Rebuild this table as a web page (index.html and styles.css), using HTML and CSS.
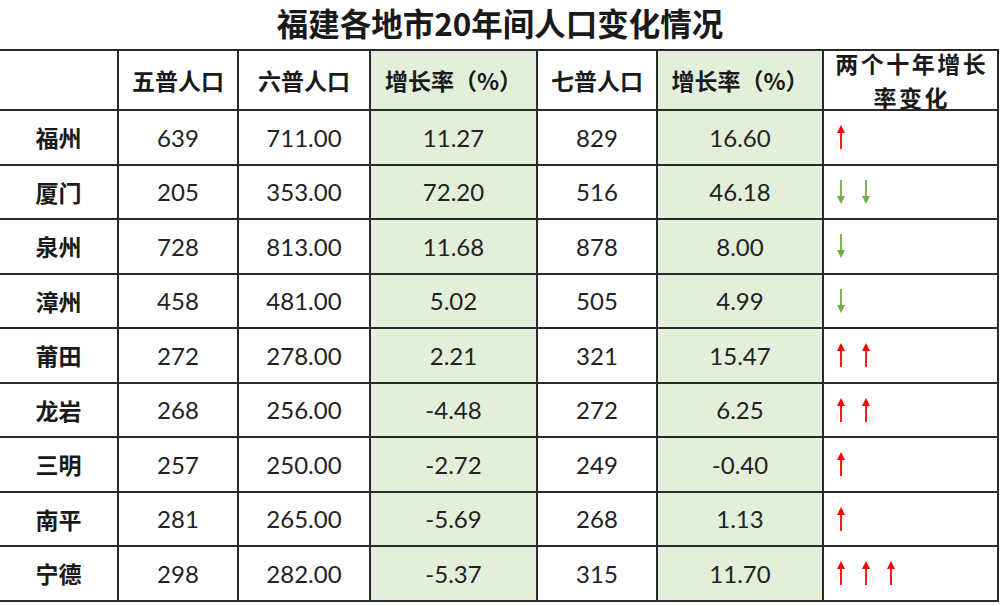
FILE: index.html
```html
<!DOCTYPE html>
<html lang="zh-CN">
<head>
<meta charset="utf-8">
<title>福建各地市20年间人口变化情况</title>
<link rel="stylesheet" href="styles.css">
</head>
<body>
<div class="page">
  <h1 class="title">福建各地市20年间人口变化情况</h1>
  <table class="sheet">
    <colgroup>
      <col class="c-name"><col class="c-5"><col class="c-6"><col class="c-r1"><col class="c-7"><col class="c-r2"><col class="c-chg">
    </colgroup>
    <thead>
      <tr class="head">
        <th class="first"></th>
        <th>五普人口</th>
        <th>六普人口</th>
        <th class="green">增长率（%）</th>
        <th>七普人口</th>
        <th class="green">增长率（%）</th>
        <th class="wrap"><div class="wrapbox"><span>两个十年增长</span><span>率变化</span></div></th>
      </tr>
    </thead>
    <tbody>
      <tr><th class="first">福州</th><td>639</td><td>711.00</td><td class="green">11.27</td><td>829</td><td class="green">16.60</td><td class="arrows"><svg class="arw up" viewBox="0 0 10 24"><polygon points="5,0 9,8 1,8"/><rect x="4.1" y="7" width="1.8" height="17"/></svg></td></tr>
      <tr><th class="first">厦门</th><td>205</td><td>353.00</td><td class="green">72.20</td><td>516</td><td class="green">46.18</td><td class="arrows"><svg class="arw down" viewBox="0 0 10 24"><rect x="4.1" y="0" width="1.8" height="17"/><polygon points="5,24 9,16 1,16"/></svg><svg class="arw down" viewBox="0 0 10 24"><rect x="4.1" y="0" width="1.8" height="17"/><polygon points="5,24 9,16 1,16"/></svg></td></tr>
      <tr><th class="first">泉州</th><td>728</td><td>813.00</td><td class="green">11.68</td><td>878</td><td class="green">8.00</td><td class="arrows"><svg class="arw down" viewBox="0 0 10 24"><rect x="4.1" y="0" width="1.8" height="17"/><polygon points="5,24 9,16 1,16"/></svg></td></tr>
      <tr><th class="first">漳州</th><td>458</td><td>481.00</td><td class="green">5.02</td><td>505</td><td class="green">4.99</td><td class="arrows"><svg class="arw down" viewBox="0 0 10 24"><rect x="4.1" y="0" width="1.8" height="17"/><polygon points="5,24 9,16 1,16"/></svg></td></tr>
      <tr><th class="first">莆田</th><td>272</td><td>278.00</td><td class="green">2.21</td><td>321</td><td class="green">15.47</td><td class="arrows"><svg class="arw up" viewBox="0 0 10 24"><polygon points="5,0 9,8 1,8"/><rect x="4.1" y="7" width="1.8" height="17"/></svg><svg class="arw up" viewBox="0 0 10 24"><polygon points="5,0 9,8 1,8"/><rect x="4.1" y="7" width="1.8" height="17"/></svg></td></tr>
      <tr><th class="first">龙岩</th><td>268</td><td>256.00</td><td class="green">-4.48</td><td>272</td><td class="green">6.25</td><td class="arrows"><svg class="arw up" viewBox="0 0 10 24"><polygon points="5,0 9,8 1,8"/><rect x="4.1" y="7" width="1.8" height="17"/></svg><svg class="arw up" viewBox="0 0 10 24"><polygon points="5,0 9,8 1,8"/><rect x="4.1" y="7" width="1.8" height="17"/></svg></td></tr>
      <tr><th class="first">三明</th><td>257</td><td>250.00</td><td class="green">-2.72</td><td>249</td><td class="green">-0.40</td><td class="arrows"><svg class="arw up" viewBox="0 0 10 24"><polygon points="5,0 9,8 1,8"/><rect x="4.1" y="7" width="1.8" height="17"/></svg></td></tr>
      <tr><th class="first">南平</th><td>281</td><td>265.00</td><td class="green">-5.69</td><td>268</td><td class="green">1.13</td><td class="arrows"><svg class="arw up" viewBox="0 0 10 24"><polygon points="5,0 9,8 1,8"/><rect x="4.1" y="7" width="1.8" height="17"/></svg></td></tr>
      <tr><th class="first">宁德</th><td>298</td><td>282.00</td><td class="green">-5.37</td><td>315</td><td class="green">11.70</td><td class="arrows"><svg class="arw up" viewBox="0 0 10 24"><polygon points="5,0 9,8 1,8"/><rect x="4.1" y="7" width="1.8" height="17"/></svg><svg class="arw up" viewBox="0 0 10 24"><polygon points="5,0 9,8 1,8"/><rect x="4.1" y="7" width="1.8" height="17"/></svg><svg class="arw up" viewBox="0 0 10 24"><polygon points="5,0 9,8 1,8"/><rect x="4.1" y="7" width="1.8" height="17"/></svg></td></tr>
    </tbody>
  </table>
</div>
</body>
</html>
```
FILE: styles.css
```css
html, body {
  margin: 0;
  padding: 0;
  background: #ffffff;
}
.page {
  width: 1000px;
  height: 606px;
  overflow: hidden;
  font-family: Lato, "Noto Sans CJK SC", sans-serif;
  color: #1c1c1c;
}
.title {
  margin: 0;
  height: 49px;
  line-height: 44px;
  text-align: center;
  font-family: "Noto Sans CJK SC", sans-serif;
  font-weight: 700;
  font-size: 31.5px;
  color: #1a1a1a;
}
.sheet {
  border-collapse: collapse;
  table-layout: fixed;
  width: 998px;
}
.c-name { width: 118px; }
.c-5 { width: 120px; }
.c-6 { width: 132px; }
.c-r1 { width: 167px; }
.c-7 { width: 120px; }
.c-r2 { width: 166px; }
.c-chg { width: 175px; }
.sheet th, .sheet td {
  border: 2px solid #2a2a2a;
  padding: 0;
  text-align: center;
  vertical-align: middle;
  white-space: nowrap;
}
.sheet th.first {
  border-left: none;
}
.sheet th {
  font-family: "Noto Sans CJK SC", sans-serif;
  font-weight: 700;
  font-size: 23px;
  color: #1a1a1a;
}
.sheet td {
  font-size: 24px;
  color: #222222;
}
.head {
  height: 60px;
}
.head th {
  font-size: 23px;
  line-height: 28px;
}
.wrapbox {
  height: 56px;
  display: flex;
  flex-direction: column;
  justify-content: center;
  align-items: center;
  font-size: 23px;
  line-height: 34px;
  letter-spacing: 2.5px;
  padding-left: 2.5px;
}
.wrapbox span {
  display: block;
  flex: none;
}
tbody tr {
  height: 54.5px;
}
.green {
  background: #e2efda;
}
.sheet td.arrows {
  text-align: left;
  padding-left: 12px;
  line-height: 0;
}
.arw {
  width: 10px;
  height: 24px;
  margin-right: 15px;
  vertical-align: middle;
}
.arw.up { fill: #ff0000; }
.arw.down { fill: #70ad47; }
```
